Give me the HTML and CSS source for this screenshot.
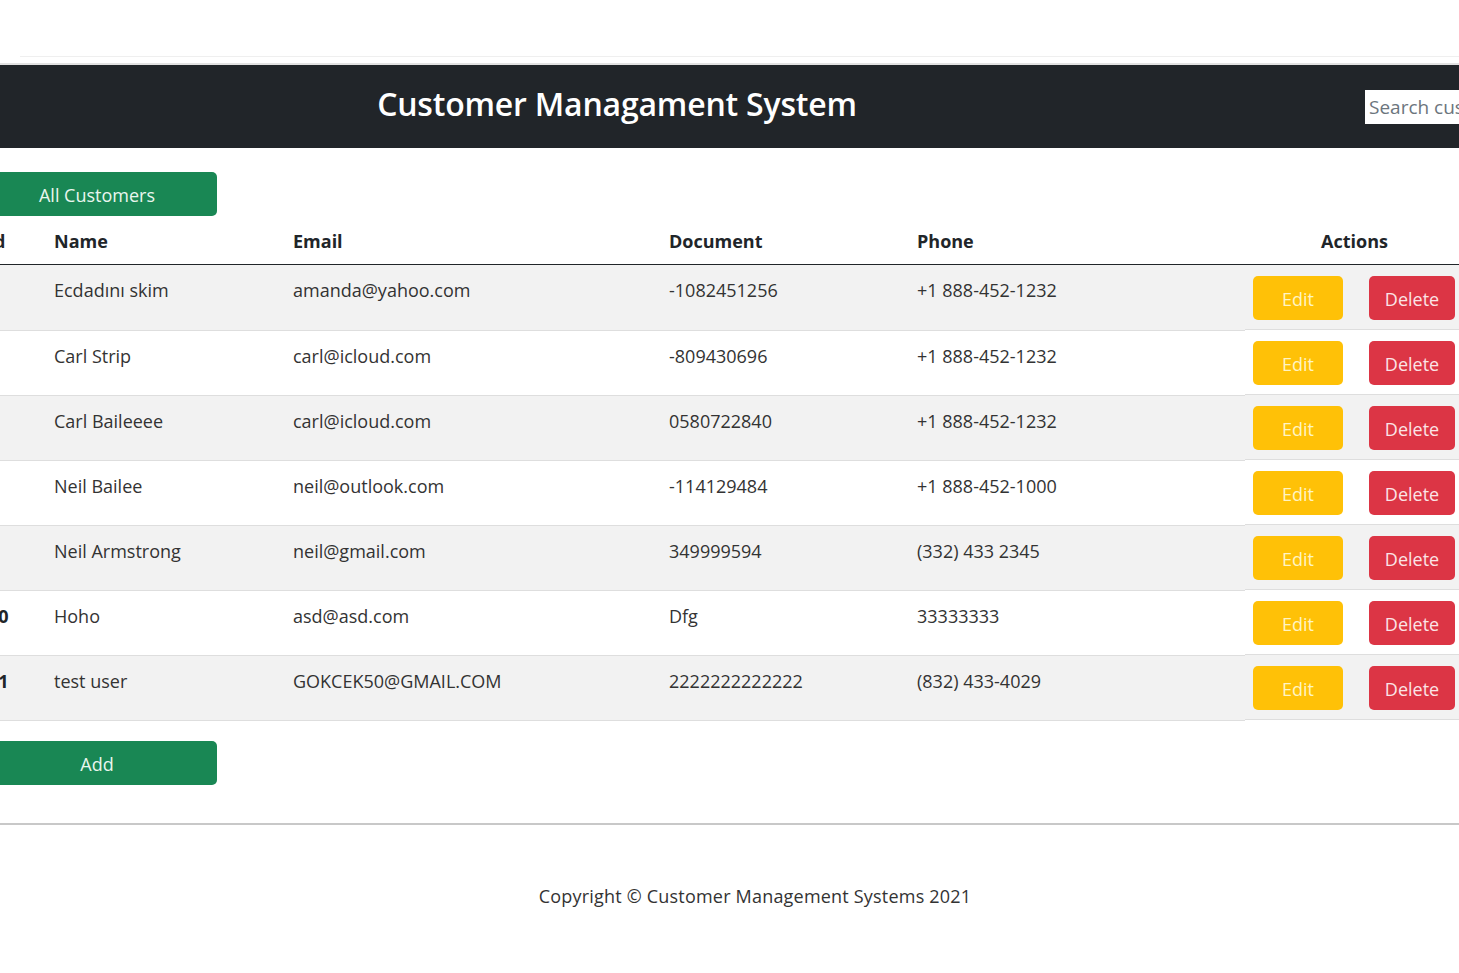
FILE: index.html
```html
<!DOCTYPE html>
<html lang="en">
<head>
<meta charset="utf-8">
<title>Customer Managament System</title>
<link rel="stylesheet" href="styles.css">
</head>
<body>
<div class="page">
  <div class="topline"></div>
  <div class="topline2"></div>
  <header class="header">
    <h1 class="title">Customer Managament System</h1>
    <input class="search" type="text" placeholder="Search customers">
  </header>
  <main class="content">
    <button class="btn btn-green">All Customers</button>
    <table class="table">
      <colgroup>
        <col class="c-id"><col class="c-name"><col class="c-email"><col class="c-doc"><col class="c-phone"><col class="c-act">
      </colgroup>
      <thead>
        <tr><th class="id">Id</th><th>Name</th><th>Email</th><th>Document</th><th>Phone</th><th class="act-h">Actions</th></tr>
      </thead>
      <tbody>
        <tr><th class="id">4</th><td>Ecdadını skim</td><td>amanda@yahoo.com</td><td>-1082451256</td><td>+1 888-452-1232</td><td class="act"><button class="btn btn-edit">Edit</button><button class="btn btn-del">Delete</button></td></tr>
        <tr><th class="id">5</th><td>Carl Strip</td><td>carl@icloud.com</td><td>-809430696</td><td>+1 888-452-1232</td><td class="act"><button class="btn btn-edit">Edit</button><button class="btn btn-del">Delete</button></td></tr>
        <tr><th class="id">6</th><td>Carl Baileeee</td><td>carl@icloud.com</td><td>0580722840</td><td>+1 888-452-1232</td><td class="act"><button class="btn btn-edit">Edit</button><button class="btn btn-del">Delete</button></td></tr>
        <tr><th class="id">7</th><td>Neil Bailee</td><td>neil@outlook.com</td><td>-114129484</td><td>+1 888-452-1000</td><td class="act"><button class="btn btn-edit">Edit</button><button class="btn btn-del">Delete</button></td></tr>
        <tr><th class="id">8</th><td>Neil Armstrong</td><td>neil@gmail.com</td><td>349999594</td><td>(332) 433 2345</td><td class="act"><button class="btn btn-edit">Edit</button><button class="btn btn-del">Delete</button></td></tr>
        <tr><th class="id">10</th><td>Hoho</td><td>asd@asd.com</td><td>Dfg</td><td>33333333</td><td class="act"><button class="btn btn-edit">Edit</button><button class="btn btn-del">Delete</button></td></tr>
        <tr><th class="id">11</th><td>test user</td><td>GOKCEK50@GMAIL.COM</td><td>2222222222222</td><td>(832) 433-4029</td><td class="act"><button class="btn btn-edit">Edit</button><button class="btn btn-del">Delete</button></td></tr>
      </tbody>
    </table>
    <button class="btn btn-green btn-add">Add</button>
  </main>
  <footer class="footer">
    <p class="copy">Copyright © Customer Management Systems 2021</p>
  </footer>
</div>
</body>
</html>
```

FILE: styles.css
```css
html, body {
  margin: 0;
  padding: 0;
  background: #fff;
  overflow: hidden;
}
body {
  font-family: "Open Sans", "Noto Sans", "Liberation Sans", sans-serif;
  font-size: 18px;
  color: #212529;
}
.page {
  margin-left: -23px;
  width: 1556px;
}
.topline {
  margin-top: 56px;
  margin-left: 43px;
  height: 1px;
  background: #efefef;
}
.topline2 {
  margin-top: 6px;
  height: 2px;
  background: #e2e2e2;
}
.header {
  background: #212529;
  height: 83px;
  display: flex;
  align-items: center;
}
.title {
  flex: 0 0 1280px;
  width: 1280px;
  margin: -6px 0 0;
  text-align: center;
  color: #fff;
  font-size: 32px;
  font-weight: 600;
  letter-spacing: -0.2px;
}
.search {
  flex: 0 0 220px;
  margin-left: 108px;
  width: 220px;
  height: 34px;
  box-sizing: border-box;
  border: none;
  padding: 0 4px;
  font-family: inherit;
  font-size: 19px;
  color: #6c757d;
  background: #fff;
}
.search::placeholder { color: #6c757d; }
.content {
  padding-top: 24px;
}
.btn {
  display: inline-block;
  border: none;
  border-radius: 5px;
  font-family: inherit;
  font-size: 18px;
  height: 44px;
  padding: 2px 0 0;
  cursor: pointer;
}
.btn-green {
  width: 240px;
  background: #198754;
  color: #e9f6ee;
}
.table {
  margin-top: 2px;
  border-collapse: collapse;
  table-layout: fixed;
  width: 1510px;
}
.c-id { width: 69px; }
.c-name { width: 239px; }
.c-email { width: 376px; }
.c-doc { width: 248px; }
.c-phone { width: 336px; }
.c-act { width: 242px; }
.table thead th {
  text-align: left;
  font-weight: 700;
  line-height: 28px;
  padding: 9px 8px 9px;
  border-bottom: 1px solid #212529;
}
.table thead th.act-h {
  padding-left: 76px;
}
.table tbody th,
.table tbody td {
  text-align: left;
  vertical-align: top;
  line-height: 28px;
  padding: 11px 8px 9px;
  border-bottom: 1px solid #dedede;
  white-space: nowrap;
}
.table th.id { padding-left: 11px; }
.table tbody th { font-weight: 700; }
.table tbody td { font-weight: 400; color: #333; }
.table tbody tr:nth-child(odd) { background: #f2f2f2; }
.table tbody td.act {
  display: flex;
  gap: 26px;
}
.btn-edit {
  width: 90px;
  background: #ffc107;
  color: #fff4c4;
}
.btn-del {
  width: 86px;
  background: #dc3545;
  color: #fbe4e6;
}
.btn-add {
  margin-top: 20px;
}
.footer {
  margin-top: 38px;
  border-top: 2px solid #c8c8c8;
}
.copy {
  margin: 57px 0 0;
  text-align: center;
  line-height: 28px;
  color: #333;
  letter-spacing: 0.2px;
}
```
